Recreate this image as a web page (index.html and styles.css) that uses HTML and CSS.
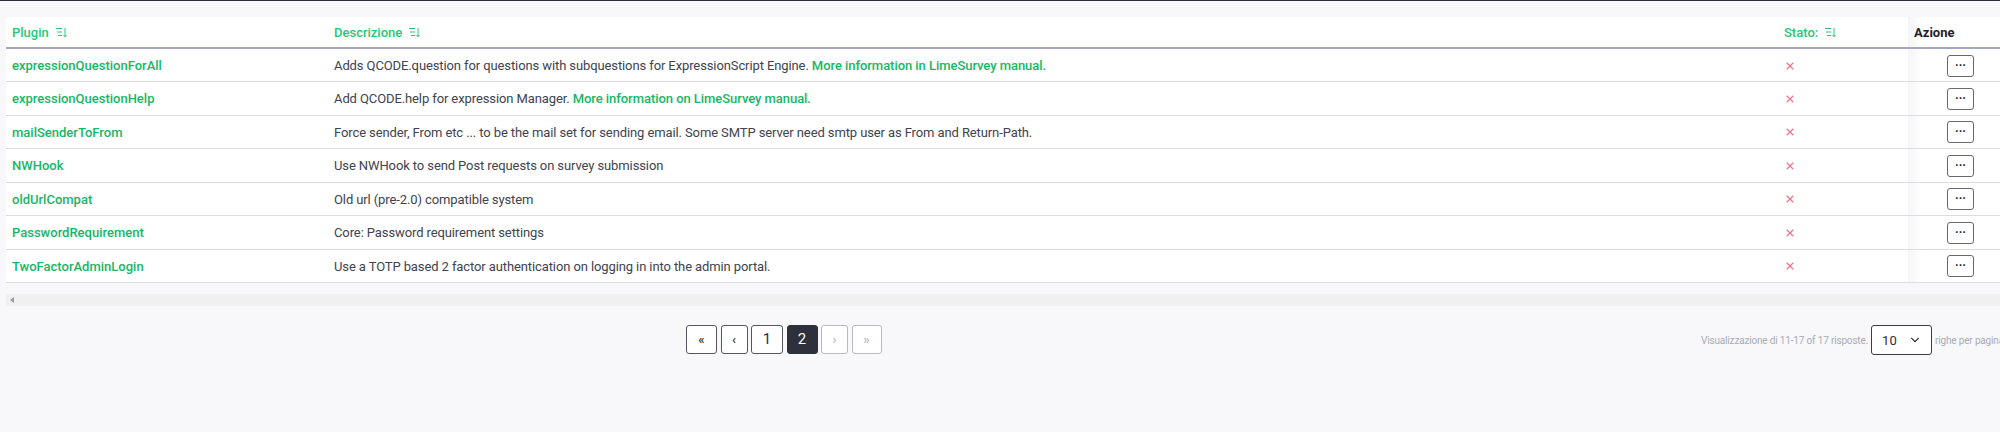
FILE: index.html
```html
<!DOCTYPE html>
<html lang="it">
<head>
<meta charset="utf-8">
<title>Plugin</title>
<link rel="stylesheet" href="styles.css">
</head>
<body>
<div class="topline"></div>
<div class="wrap">
<table class="grid">
<colgroup><col class="c1"><col class="c2"><col class="c3"><col class="c4"></colgroup>
<thead>
<tr>
<th><span class="sort">Plugin <svg class="si" viewBox="0 0 11 9"><path d="M0 .5h6M1 4h5M2 7.500h4M9 0v8.500M7.500 7l1.500 1.800L10.500 7"/></svg></span></th>
<th><span class="sort">Descrizione <svg class="si" viewBox="0 0 11 9"><path d="M0 .5h6M1 4h5M2 7.500h4M9 0v8.500M7.500 7l1.500 1.800L10.500 7"/></svg></span></th>
<th><span class="sort">Stato: <svg class="si" viewBox="0 0 11 9"><path d="M0 .5h6M1 4h5M2 7.500h4M9 0v8.500M7.500 7l1.500 1.800L10.500 7"/></svg></span></th>
<th class="act">Azione</th>
</tr>
</thead>
<tbody>
<tr><td><a href="#">expressionQuestionForAll</a></td><td class="desc">Adds QCODE.question for questions with subquestions for ExpressionScript Engine. <a href="#">More information in LimeSurvey manual.</a></td><td class="st"><svg class="x" viewBox="0 0 8 8"><path d="M.7.7l6.600 6.600M7.300.7L.7 7.300"/></svg></td><td class="act"><button class="more">···</button></td></tr>
<tr><td><a href="#">expressionQuestionHelp</a></td><td class="desc">Add QCODE.help for expression Manager. <a href="#">More information on LimeSurvey manual.</a></td><td class="st"><svg class="x" viewBox="0 0 8 8"><path d="M.7.7l6.600 6.600M7.300.7L.7 7.300"/></svg></td><td class="act"><button class="more">···</button></td></tr>
<tr><td><a href="#">mailSenderToFrom</a></td><td class="desc">Force sender, From etc ... to be the mail set for sending email. Some SMTP server need smtp user as From and Return-Path.</td><td class="st"><svg class="x" viewBox="0 0 8 8"><path d="M.7.7l6.600 6.600M7.300.7L.7 7.300"/></svg></td><td class="act"><button class="more">···</button></td></tr>
<tr><td><a href="#">NWHook</a></td><td class="desc">Use NWHook to send Post requests on survey submission</td><td class="st"><svg class="x" viewBox="0 0 8 8"><path d="M.7.7l6.600 6.600M7.300.7L.7 7.300"/></svg></td><td class="act"><button class="more">···</button></td></tr>
<tr><td><a href="#">oldUrlCompat</a></td><td class="desc">Old url (pre-2.0) compatible system</td><td class="st"><svg class="x" viewBox="0 0 8 8"><path d="M.7.7l6.600 6.600M7.300.7L.7 7.300"/></svg></td><td class="act"><button class="more">···</button></td></tr>
<tr><td><a href="#">PasswordRequirement</a></td><td class="desc">Core: Password requirement settings</td><td class="st"><svg class="x" viewBox="0 0 8 8"><path d="M.7.7l6.600 6.600M7.300.7L.7 7.300"/></svg></td><td class="act"><button class="more">···</button></td></tr>
<tr><td><a href="#">TwoFactorAdminLogin</a></td><td class="desc">Use a TOTP based 2 factor authentication on logging in into the admin portal.</td><td class="st"><svg class="x" viewBox="0 0 8 8"><path d="M.7.7l6.600 6.600M7.300.7L.7 7.300"/></svg></td><td class="act"><button class="more">···</button></td></tr>
</tbody>
</table>
<div class="scroll"><svg class="arrow" viewBox="0 0 4 6"><path d="M4 0v6L0 3z"/></svg></div>
<div class="foot">
<nav class="pager">
<button class="pg w31">«</button>
<button class="pg w27">‹</button>
<button class="pg w32 num">1</button>
<button class="pg w31 num on">2</button>
<button class="pg w27 off">›</button>
<button class="pg w30 off">»</button>
</nav>
<div class="summary">
<span class="tight">Visualizzazione di 11-17 of 17 risposte.</span>
<span class="sel">10<svg class="chev" viewBox="0 0 12 7"><path d="M1.500 1l4.500 4.500L10.500 1"/></svg></span>
<span class="tight">righe per pagina</span>
</div>
</div>
</div>
</body>
</html>
```
FILE: styles.css
```css
* { box-sizing: border-box; }
html, body { margin: 0; padding: 0; }
body {
  width: 2000px;
  height: 432px;
  overflow: hidden;
  background: #f8f8fb;
  font-family: Roboto, "Noto Sans", sans-serif;
  font-size: 13px;
  color: #40434f;
}
.topline { height: 1px; background: #2c2e38; }
.wrap { padding: 16px 0 0 6px; }
.grid {
  width: 1994px;
  table-layout: fixed;
  border-collapse: collapse;
  background: #fff;
}
.c1 { width: 322px; }
.c2 { width: 1450px; }
.c3 { width: 130px; }
.c4 { width: 92px; }
th {
  height: 31px;
  padding: 0 6px;
  text-align: left;
  font-weight: 500;
  color: #2cc578;
  border-bottom: 2px solid #a3a6bd;
}
td {
  height: 33.500px;
  padding: 1px 6px 0;
  border-bottom: 1px solid #dcdce0;
  white-space: nowrap;
}
td a { color: #14b866; font-weight: 500; text-decoration: none; }
.desc { letter-spacing: -0.105px; }
.desc a { letter-spacing: -0.05px; }
.sort { display: inline-flex; align-items: center; gap: 5px; }
.si { width: 11px; height: 9px; fill: none; stroke: #2cc578; stroke-width: 1; margin-left: 2px; }
th.act { color: #1e2029; font-weight: 700; background: linear-gradient(90deg, #f4f4f7, #fff 14px); }
td.act { text-align: right; padding: 1px 26px 0 0; background: linear-gradient(90deg, #f6f6f8, #fff 14px); }
.st { padding-left: 8px; line-height: 0; }
.x { width: 8px; height: 8px; fill: none; stroke: #f4778b; stroke-width: 1.300; }
.more {
  width: 27px;
  height: 22px;
  padding: 0;
  background: #fff;
  border: 1px solid #666872;
  border-radius: 3px;
  color: #1e2029;
  font: 700 12px/1 Roboto, sans-serif;
  vertical-align: middle;
}
.scroll {
  width: 1994px;
  height: 12px;
  margin-top: 11px;
  background: #f0f0f0;
  display: flex;
  align-items: center;
  padding-left: 4px;
}
.arrow { width: 4px; height: 6px; fill: #9a9a9a; }
.foot {
  position: relative;
  height: 60px;
  padding-top: 19px;
  display: flex;
}
.pager { display: flex; gap: 3.500px; margin-left: 680px; height: 29px; }
.pg {
  height: 29px;
  padding: 0;
  background: #fff;
  border: 1px solid #55575f;
  border-radius: 3px;
  color: #2c2e38;
  font: 500 13px/1 Roboto, sans-serif;
}
.num { font-size: 15px; font-weight: 400; }
.w27 { width: 27px; } .w30 { width: 30px; } .w31 { width: 31px; } .w32 { width: 32px; }
.on { background: #2e303c; border-color: #2e303c; color: #fff; }
.off { border-color: #b7b9c6; color: #b7b9c6; }
.summary {
  position: absolute;
  left: 1695px;
  top: 19px;
  width: 299px;
  height: 30px;
  display: flex;
  align-items: center;
  gap: 3px;
  font-size: 10px;
  color: #a9abb3;
  white-space: nowrap;
}
.tight { letter-spacing: -0.170px; }
.sel {
  flex: none;
  width: 61px;
  height: 30px;
  padding: 0 11px 0 10px;
  display: flex;
  align-items: center;
  justify-content: space-between;
  background: #fff;
  border: 1px solid #3a3c46;
  border-radius: 3px;
  font-size: 13px;
  color: #2c2e38;
}
.chev { width: 10px; height: 6px; fill: none; stroke: #2c2e38; stroke-width: 1.400; }
```
